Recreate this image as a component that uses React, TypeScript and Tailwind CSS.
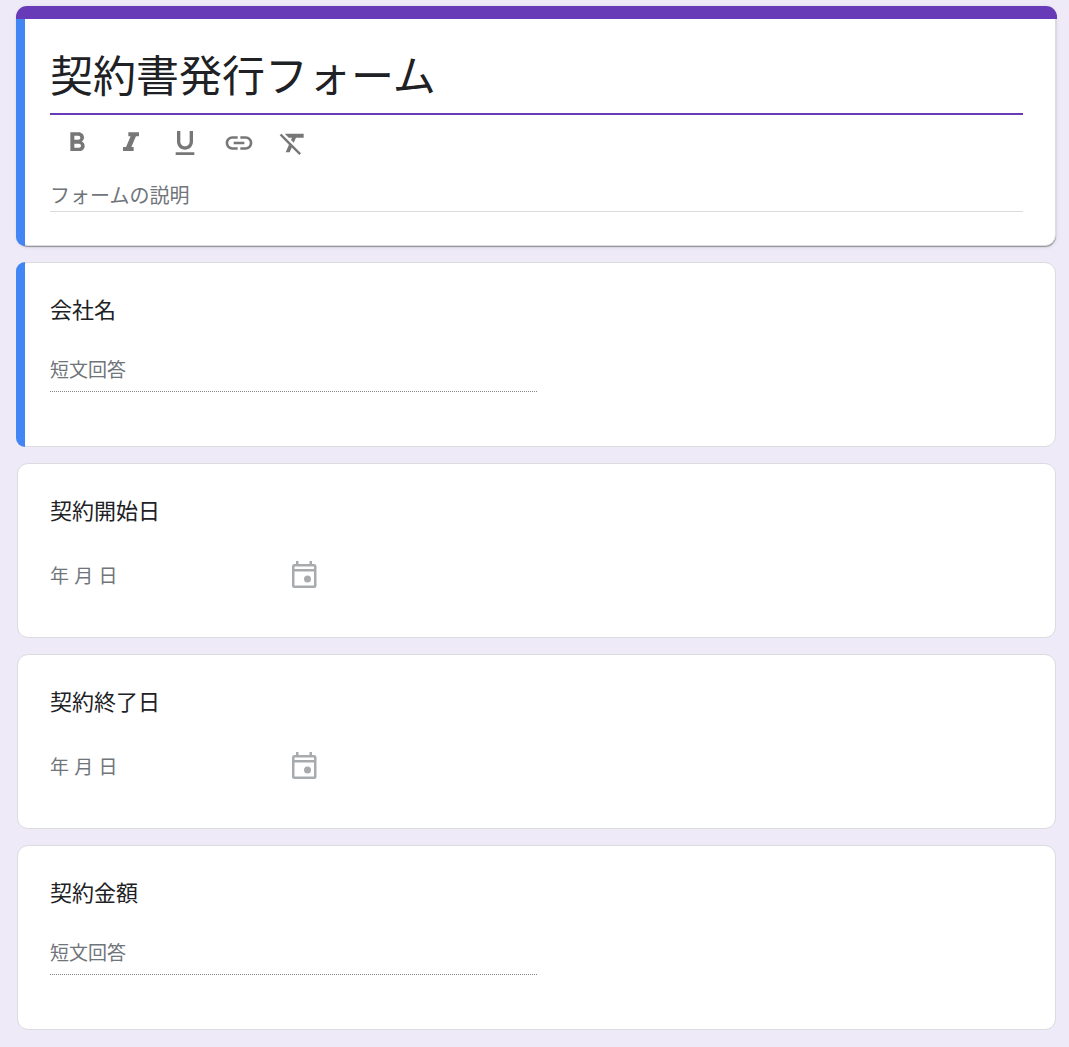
import { useState } from "react";
import type { ReactNode } from "react";

type Question = {
  id: string;
  title: string;
  kind: "short" | "date";
  selected?: boolean;
};

const questions: Question[] = [
  { id: "company", title: "会社名", kind: "short", selected: true },
  { id: "start", title: "契約開始日", kind: "date" },
  { id: "end", title: "契約終了日", kind: "date" },
  { id: "amount", title: "契約金額", kind: "short" },
];

const tools = [
  {
    label: "太字",
    path: "M15.6 10.79c.97-.67 1.65-1.77 1.65-2.79 0-2.26-1.75-4-4-4H7v14h7.04c2.09 0 3.71-1.7 3.71-3.79 0-1.52-.86-2.82-2.15-3.42zM10 6.5h3c.83 0 1.5.67 1.5 1.5s-.67 1.5-1.5 1.5h-3v-3zm3.5 9H10v-3h3.5c.83 0 1.5.67 1.5 1.5s-.67 1.5-1.5 1.5z",
  },
  {
    label: "斜体",
    path: "M10 4v3h1.7l-3.42 8H6v3h8v-3h-1.7l3.42-8H18V4z",
  },
  {
    label: "下線",
    path: "M12 17c3.31 0 6-2.69 6-6V3h-2.5v8c0 1.93-1.57 3.5-3.5 3.5S8.5 12.93 8.5 11V3H6v8c0 3.31 2.69 6 6 6zm-7 2v2h14v-2H5z",
  },
  {
    label: "リンクを挿入",
    path: "M3.9 12c0-1.71 1.39-3.1 3.1-3.1h4V7H7c-2.76 0-5 2.24-5 5s2.24 5 5 5h4v-1.9H7c-1.71 0-3.1-1.39-3.1-3.1zM8 13h8v-2H8v2zm9-6h-4v1.9h4c1.71 0 3.1 1.39 3.1 3.1s-1.39 3.1-3.1 3.1h-4V17h4c2.76 0 5-2.24 5-5s-2.24-5-5-5z",
  },
  {
    label: "書式をクリア",
    path: "M3.27 5L2 6.27l6.97 6.97L6.5 19h3l1.57-3.66L16.73 21 18 19.73 3.55 5.27 3.27 5zM6 5v.18L8.82 8h2.4l-.72 1.68 2.1 2.1L14.21 8H20V5H6z",
  },
];

function SelectionBar({ className }: { className: string }) {
  return (
    <span
      aria-hidden="true"
      className={`absolute -bottom-px -left-[2px] w-[9px] bg-[#4285f4] ${className}`}
    />
  );
}

function Card({ children, className }: { children: ReactNode; className: string }) {
  return (
    <section className={`relative rounded-[11px] border border-[#dadce0] bg-white px-8 ${className}`}>
      {children}
    </section>
  );
}

function CalendarIcon() {
  return (
    <svg viewBox="0 0 32 32" className="size-8 shrink-0" aria-hidden="true">
      <path
        fill="#a8abad"
        fillRule="evenodd"
        d="M8 3h2.5v3h11V3H24v3h2a2.500 2.500 0 0 1 2.500 2.500v19a2.500 2.500 0 0 1-2.500 2.500H6.500A2.500 2.500 0 0 1 4 27.500v-19A2.500 2.500 0 0 1 6.500 6H8zM6.500 8.500v2.500h19.500v-2.500zM6.500 13.500v14h19.500v-14z"
      />
      <circle cx="19.5" cy="21" r="3.5" fill="#a8abad" />
    </svg>
  );
}

function FormHeader() {
  const [title, setTitle] = useState("契約書発行フォーム");
  const [description, setDescription] = useState("");
  return (
    <Card className="pt-[35px] pb-[33px] shadow-[0_1px_1px_rgba(0,0,0,0.35),0_1px_4px_rgba(0,0,0,0.1)]">
      <SelectionBar className="top-3 rounded-bl-[9px]" />
      <span
        aria-hidden="true"
        className="absolute -top-px -right-[2px] -left-[2px] h-[13px] rounded-t-[11px] bg-[#673ab7]"
      />
      <input
        aria-label="フォームのタイトル"
        value={title}
        onChange={(e) => setTitle(e.target.value)}
        className="block h-[73px] w-full border-b-2 border-[#673ab7] pb-[10px] text-[43px] text-[#202124] outline-none"
      />
      <div className="flex pt-px">
        {tools.map((tool) => (
          <button key={tool.label} type="button" aria-label={tool.label} className="flex size-[54px] items-center justify-center">
            <svg viewBox="0 0 24 24" className="size-8 fill-[#777777]" aria-hidden="true">
              <path d={tool.path} />
            </svg>
          </button>
        ))}
      </div>
      <input
        aria-label="フォームの説明"
        placeholder="フォームの説明"
        value={description}
        onChange={(e) => setDescription(e.target.value)}
        className="mt-2 block h-[34px] w-full border-b border-[#dadce0] pt-1 text-[20px] text-[#202124] outline-none placeholder:text-[#70757a]"
      />
    </Card>
  );
}

function QuestionCard({ question }: { question: Question }) {
  return (
    <Card className={question.kind === "short" ? "pt-8 pb-[54px]" : "pt-8 pb-[47px]"}>
      {question.selected && <SelectionBar className="-top-px rounded-l-[9px]" />}
      <label htmlFor={question.id} className="block text-[22px] leading-8 text-[#202124]">
        {question.title}
      </label>
      {question.kind === "short" ? (
        <input
          id={question.id}
          disabled
          placeholder="短文回答"
          className="mt-5 block h-[45px] w-1/2 border-b border-dotted border-[#80868b] bg-transparent pt-1 text-[19px] placeholder:text-[#70757a]"
        />
      ) : (
        <div className="mt-[30px] flex h-8 w-[270px] items-center">
          <input
            id={question.id}
            disabled
            placeholder="年 月 日"
            className="min-w-0 flex-1 bg-transparent pt-[6px] text-[19px] placeholder:text-[#70757a]"
          />
          <CalendarIcon />
        </div>
      )}
    </Card>
  );
}

export default function App() {
  return (
    <main className="flex min-h-screen flex-col gap-4 bg-[#eeeaf7] pt-[6px] pr-[13px] pb-[17px] pl-[17px] font-['Liberation_Sans','Noto_Sans_CJK_JP',sans-serif]">
      <FormHeader />
      {questions.map((question) => (
        <QuestionCard key={question.id} question={question} />
      ))}
    </main>
  );
}
